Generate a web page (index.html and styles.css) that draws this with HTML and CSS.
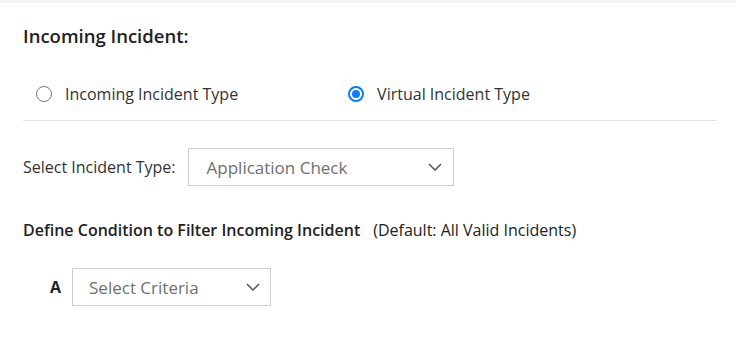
FILE: index.html
```html
<!DOCTYPE html>
<html>
<head>
    <title>Incoming Incident</title>
    <meta name="viewport" content="width=device-width, initial-scale=1">
    <link rel="stylesheet" href="styles.css">
</head>
<body>

<div class="panel">
    <!-- Section title -->
    <h2 class="title">Incoming Incident:</h2>

    <!-- Incident source -->
    <div class="radio-row">
        <label class="radio">
            <span class="radio-dot"></span>
            Incoming Incident Type
        </label>
        <label class="radio checked">
            <span class="radio-dot"></span>
            Virtual Incident Type
        </label>
    </div>

    <hr class="divider" />

    <!-- Incident type -->
    <div class="field-row">
        <span class="field-label">Select Incident Type:</span>
        <div class="select select-type">
            <span>Application Check</span>
            <svg class="chevron" width="14" height="8" viewBox="0 0 14 8"><path d="M1 1 L7 7 L13 1" fill="none" stroke="#555" stroke-width="1.5"/></svg>
        </div>
    </div>

    <!-- Filter condition -->
    <div class="condition">
        <span class="condition-label">Define Condition to Filter Incoming Incident</span>
        <span class="condition-hint">(Default: All Valid Incidents)</span>
    </div>

    <div class="criteria-row">
        <span class="criteria-letter">A</span>
        <div class="select select-criteria">
            <span>Select Criteria</span>
            <svg class="chevron" width="14" height="8" viewBox="0 0 14 8"><path d="M1 1 L7 7 L13 1" fill="none" stroke="#555" stroke-width="1.5"/></svg>
        </div>
    </div>
</div>

</body>
</html>
```

FILE: styles.css
```css
/* Reset */
* {
    margin: 0;
    padding: 0;
    box-sizing: border-box;
    font-family: "Open Sans", "Liberation Sans", sans-serif;
}

body {
    background: #ffffff;
    color: #333333;
}

/* Panel */
.panel {
    border-top: 3px solid #f4f4f4;
    padding: 21px 19px 0 23px;
}

.title {
    font-size: 18.5px;
    font-weight: 600;
    line-height: 24px;
    color: #222222;
}

/* Radios */
.radio-row {
    display: flex;
    align-items: center;
    gap: 110px;
    margin-top: 35px;
    padding-left: 13px;
}

.radio {
    display: flex;
    align-items: center;
    gap: 13px;
    font-size: 16px;
    line-height: 22px;
    color: #333333;
    cursor: pointer;
}

.radio-dot {
    width: 16px;
    height: 16px;
    border: 1.5px solid #777777;
    border-radius: 50%;
    display: flex;
    align-items: center;
    justify-content: center;
}

.radio.checked .radio-dot {
    border: 2px solid #0b7dfa;
}

.radio.checked .radio-dot::after {
    content: "";
    width: 8px;
    height: 8px;
    border-radius: 50%;
    background: #0b7dfa;
}

.divider {
    border: none;
    border-top: 1px solid #e4e4e4;
    margin-top: 15px;
}

/* Select fields */
.field-row {
    display: flex;
    align-items: center;
    gap: 12px;
    margin-top: 27px;
}

.field-label {
    font-size: 16px;
    line-height: 22px;
    color: #333333;
}

.select {
    height: 38px;
    border: 1px solid #cfcfcf;
    background: #ffffff;
    display: flex;
    align-items: center;
    justify-content: space-between;
    font-size: 17px;
    color: #707070;
}

.select-type {
    width: 266px;
    padding: 0 11px 0 18px;
}

.select-criteria {
    width: 199px;
    padding: 0 10px 0 16px;
}

.chevron {
    display: block;
}

/* Condition */
.condition {
    display: flex;
    gap: 13px;
    margin-top: 33px;
    font-size: 16px;
    line-height: 22px;
    color: #222222;
}

.condition-label {
    font-weight: 600;
}

.criteria-row {
    display: flex;
    align-items: center;
    gap: 11px;
    margin-top: 27px;
    padding-left: 27px;
}

.criteria-letter {
    font-size: 16px;
    font-weight: 700;
    color: #222222;
}
```
